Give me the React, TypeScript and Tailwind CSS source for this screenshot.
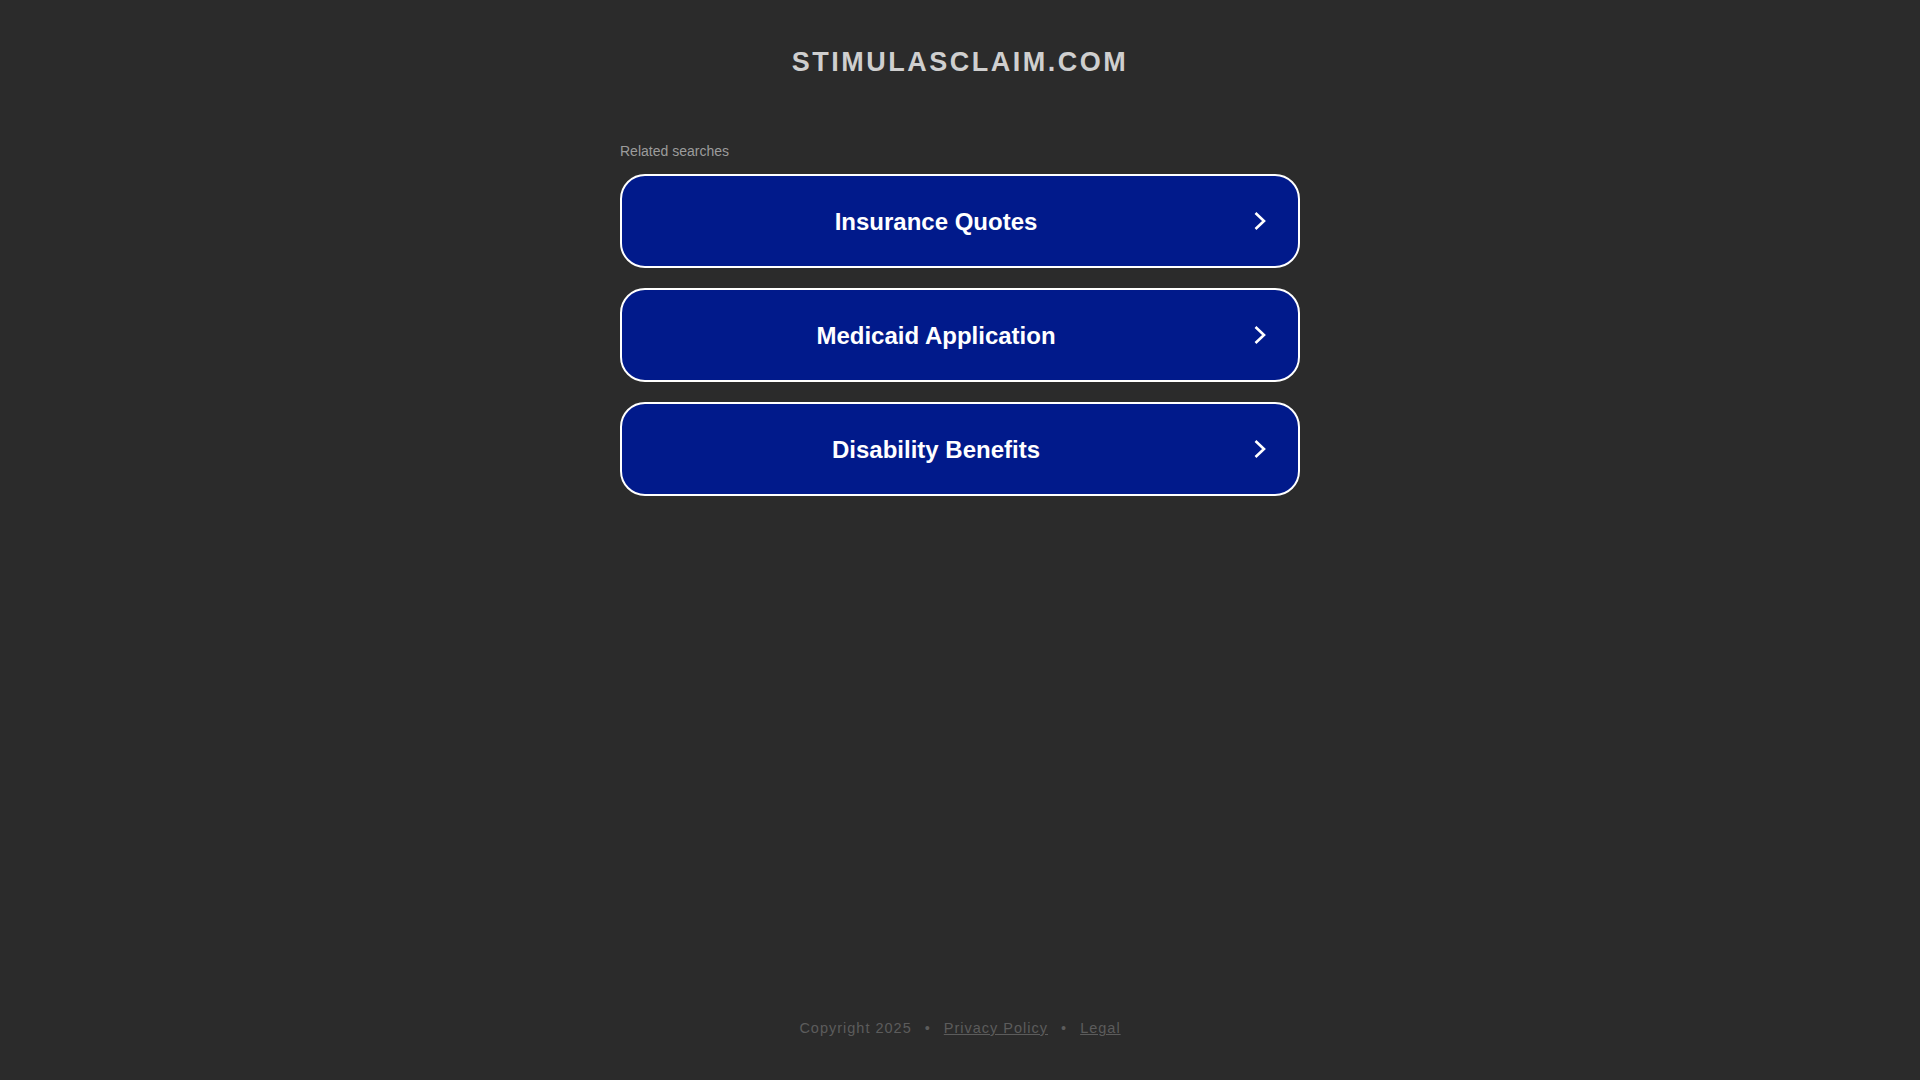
const links = ["Insurance Quotes", "Medicaid Application", "Disability Benefits"];

function Chevron() {
  return (
    <svg width="14" height="20" viewBox="0 0 14 20" className="ml-[3px] mr-[31px] shrink-0" fill="none">
      <polyline points="2.5,2 11,10 2.5,18" stroke="#ffffff" strokeWidth="2.6" />
    </svg>
  );
}

export default function App() {
  return (
    <div
      className="flex h-screen flex-col bg-[#2b2b2b]"
      style={{ fontFamily: '"Liberation Sans", Arial, sans-serif' }}
    >
      <header className="pt-[47px] text-center">
        <h1 className="text-[27px] leading-[31px] font-bold uppercase tracking-[2.5px] text-[#cfcfcf]">
          stimulasclaim.com
        </h1>
      </header>

      <main className="mx-auto mt-[65px] w-[680px]">
        <p className="text-[14px] leading-[16px] text-[#9c9c9c]">Related searches</p>
        <ul className="mt-[15px] flex flex-col gap-[20px]">
          {links.map((label) => (
            <li key={label}>
              <a
                href="#"
                className="flex h-[94px] items-center rounded-[25px] border-2 border-white bg-[#011a8b] text-white"
              >
                <span className="flex-1 pt-[2px] text-center text-[24px] leading-[28px] font-bold">{label}</span>
                <Chevron />
              </a>
            </li>
          ))}
        </ul>
      </main>

      <footer className="mt-auto flex justify-center pb-[44px] text-[14.5px] leading-[16px] tracking-[1px] text-[#5c5c5c]">
        <span>Copyright 2025</span>
        <span className="mx-[13px]">•</span>
        <a href="#" className="underline">Privacy Policy</a>
        <span className="mx-[13px]">•</span>
        <a href="#" className="underline">Legal</a>
      </footer>
    </div>
  );
}
